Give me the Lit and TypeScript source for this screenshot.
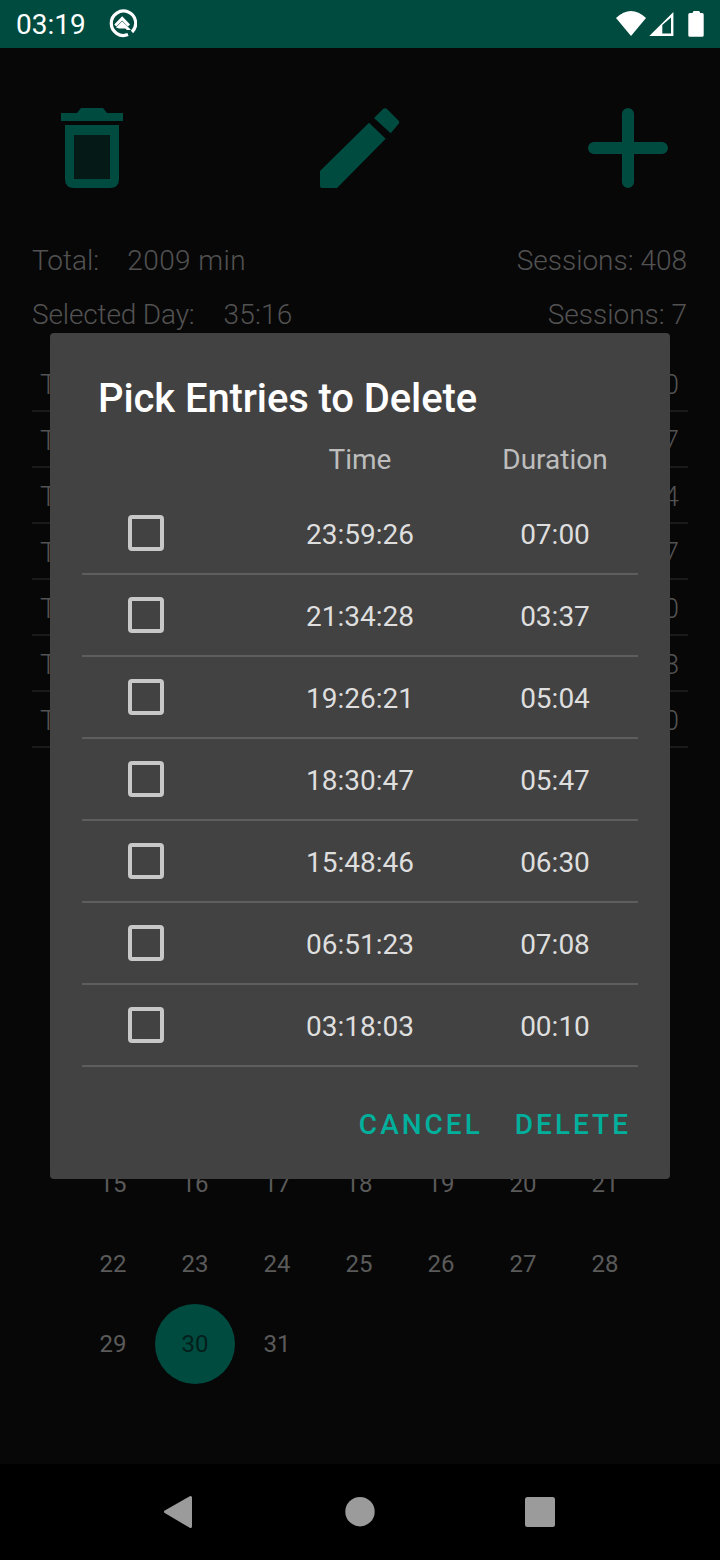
import {LitElement, html, css} from 'lit';
import {customElement} from 'lit/decorators.js';
import {classMap} from 'lit/directives/class-map.js';

const ENTRIES = [
  ['23:59:26', '07:00'],
  ['21:34:28', '03:37'],
  ['19:26:21', '05:04'],
  ['18:30:47', '05:47'],
  ['15:48:46', '06:30'],
  ['06:51:23', '07:08'],
  ['03:18:03', '00:10'],
];

const DAYS = Array.from({length: 31}, (_, i) => i + 1);

@customElement('app-root')
export class AppRoot extends LitElement {
  static override styles = css`
    :host {
      display: block;
      position: relative;
      width: 720px;
      height: 1560px;
      overflow: hidden;
      font-family: Roboto, sans-serif;
      background: #070707;
    }

    .page {
      display: flex;
      flex-direction: column;
      height: 100%;
    }

    .status {
      flex: none;
      height: 48px;
      display: flex;
      align-items: center;
      background: #004b40;
      color: #fff;
      font-size: 28px;
      padding-left: 16px;
    }

    .status .time {
      width: 91px;
    }

    .status-icons {
      margin-left: auto;
      display: block;
    }

    .main {
      flex: 1;
      min-height: 0;
    }

    .tools {
      display: flex;
      justify-content: space-between;
      padding: 60px 52px 0;
    }

    .tools svg {
      display: block;
    }

    .stats {
      padding: 46px 33px 14px 32px;
      color: #525252;
      font-size: 28px;
      font-weight: 300;
    }

    .stat {
      display: flex;
      justify-content: space-between;
      height: 54px;
      line-height: 54px;
    }

    .stat .total {
      margin-left: 28px;
      letter-spacing: 0.4px;
    }

    .stat .day {
      margin-left: 29px;
      letter-spacing: 0.2px;
    }

    .stat .selected {
      letter-spacing: -0.15px;
    }

    .history {
      margin: 0 32px;
    }

    .history .row {
      display: flex;
      justify-content: space-between;
      box-sizing: border-box;
      height: 56px;
      padding: 2px 9px 0 8px;
      line-height: 54px;
      font-size: 28px;
      font-weight: 300;
      color: #525252;
      border-bottom: 2px solid #1a1a1a;
    }

    .calendar {
      display: grid;
      grid-template-columns: repeat(7, 82px);
      grid-auto-rows: 80px;
      margin-top: 236px;
      padding-left: 72px;
      font-size: 24px;
      color: #5a5a5a;
    }

    .cal-day {
      display: flex;
      align-items: center;
      justify-content: center;
    }

    .cal-day.selected span {
      display: flex;
      align-items: center;
      justify-content: center;
      width: 80px;
      height: 80px;
      border-radius: 50%;
      background: #004b40;
      color: #03201b;
    }

    .nav {
      flex: none;
      height: 96px;
      background: #000;
    }

    .nav svg {
      display: block;
    }

    .dialog {
      position: absolute;
      top: 333px;
      left: 50px;
      width: 620px;
      height: 846px;
      box-sizing: border-box;
      background: #424242;
      border-radius: 4px;
      padding: 41px 32px 0;
    }

    .title {
      margin: 0 0 0 16px;
      font-size: 40px;
      line-height: 50px;
      font-weight: 500;
      letter-spacing: -0.1px;
      color: #fff;
    }

    .table-row {
      display: grid;
      grid-template-columns: 166px 224px 166px;
      align-items: center;
      text-align: center;
    }

    .table-head {
      height: 69px;
      padding-top: 2px;
      box-sizing: border-box;
      font-size: 28px;
      color: #bdbdbd;
    }

    .entry {
      box-sizing: border-box;
      height: 82px;
      font-size: 28px;
      color: #dedede;
      border-bottom: 2px solid #5e5e5e;
    }

    .entry span {
      padding-top: 2px;
    }

    .check {
      box-sizing: border-box;
      width: 36px;
      height: 36px;
      margin-left: 46px;
      border: 4px solid #c8c8c8;
      border-radius: 4px;
    }

    .actions {
      display: flex;
      justify-content: flex-end;
      gap: 32px;
      padding: 40px 7px 0 0;
      font-size: 28px;
      font-weight: 500;
      line-height: 36px;
      letter-spacing: 3px;
      color: #00b09c;
    }
  `;

  private renderQ() {
    return html`<svg width="30" height="30" viewBox="108 9 30 30" fill="none" stroke="#fff">
      <path stroke-width="3.2" d="M133 32A12.2 12.2 0 1 0 129 34.6" />
      <path stroke-width="3" d="M116.3 25.5L123.2 18.5L130 25.5" />
      <path fill="#fff" stroke="none" d="M117 27.5L123.2 21.2L129.6 27.5L132 30H128L126.3 28.4H120Z" />
    </svg>`;
  }

  private renderStatusIcons() {
    return html`<svg class="status-icons" width="112" height="48" viewBox="608 0 112 48" fill="#fff">
      <path d="M616 18Q631 4 646 18L631 36Z" />
      <path fill-rule="evenodd" d="M673.4 12V36H649.3ZM671 17.5L662.3 25V33.5H671Z" />
      <path d="M692.7 13V12.5Q692.7 11 694 11H698.7Q700 11 700 12.5V13H702.2Q703.7 13 703.7 14.5V35.2Q703.7 36.7 702.2 36.7H689.8Q688.3 36.7 688.3 35.2V14.5Q688.3 13 689.8 13Z" />
    </svg>`;
  }

  private renderHistory() {
    return ENTRIES.map(
      ([time, duration]) => html`<div class="row">
        <span>Time: ${time}</span><span>${duration}</span>
      </div>`
    );
  }

  private renderCalendar() {
    return DAYS.map((day) => {
      const classes = {'cal-day': true, selected: day === 30};
      return html`<div class=${classMap(classes)}><span>${day}</span></div>`;
    });
  }

  override render() {
    return html`
      <div class="page">
        <div class="status">
          <span class="time">03:19</span>
          ${this.renderQ()} ${this.renderStatusIcons()}
        </div>
        <div class="main">
          <div class="tools">
            <svg width="80" height="80" viewBox="52 108 80 80">
              <path fill="#004b40" d="M61 121V113H77L81 108H103L107 113H123V121Z" />
              <path fill="#051a17" d="M74 135H110V179H74Z" />
              <path
                fill="#004b40"
                fill-rule="evenodd"
                d="M65 125H119V179Q119 188 110 188H74Q65 188 65 179ZM74 135V179H110V135Z"
              />
            </svg>
            <svg width="80" height="80" viewBox="320 108 80 80">
              <path
                fill="#004b40"
                d="M320 171L369 122.7L385.7 138.7L337 188H322Q320 188 320 186ZM374 118L383 109Q385 107.5 387 109L398.5 120.5Q400 122.3 398.5 124L390.7 133.3Z"
              />
            </svg>
            <svg width="80" height="80" viewBox="588 108 80 80">
              <path
                stroke="#004b40"
                stroke-width="12"
                stroke-linecap="round"
                d="M628 114V182M594 148H662"
              />
            </svg>
          </div>
          <div class="stats">
            <div class="stat">
              <span>Total:<span class="total">2009 min</span></span>
              <span>Sessions: 408</span>
            </div>
            <div class="stat">
              <span><span class="selected">Selected Day:</span><span class="day">35:16</span></span>
              <span>Sessions: 7</span>
            </div>
          </div>
          <div class="history">${this.renderHistory()}</div>
          <div class="calendar">${this.renderCalendar()}</div>
        </div>
        <div class="nav">
          <svg width="720" height="96" viewBox="0 1464 720 96" fill="#9b9b9b">
            <path
              stroke="#9b9b9b"
              stroke-width="3"
              stroke-linejoin="round"
              d="M165.5 1511.7L190.5 1497.5V1526.5Z"
            />
            <circle cx="360" cy="1511.7" r="14.7" />
            <rect x="525" y="1497" width="30" height="30" rx="2.5" />
          </svg>
        </div>
      </div>
      <div class="dialog">
        <h2 class="title">Pick Entries to Delete</h2>
        <div class="table-row table-head">
          <span></span><span>Time</span><span>Duration</span>
        </div>
        ${ENTRIES.map(
          ([time, duration]) => html`<div class="table-row entry">
            <div class="check"></div>
            <span>${time}</span><span>${duration}</span>
          </div>`
        )}
        <div class="actions"><span>CANCEL</span><span>DELETE</span></div>
      </div>
    `;
  }
}

declare global {
  interface HTMLElementTagNameMap {
    'app-root': AppRoot;
  }
}
